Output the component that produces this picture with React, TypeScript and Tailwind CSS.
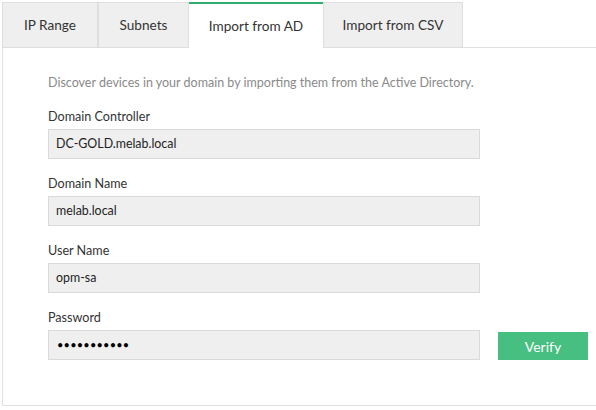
import React from 'react';

const tabs = [
  { label: 'IP Range', width: 'w-[96px]' },
  { label: 'Subnets', width: 'w-[91px]' },
  { label: 'Import from AD', width: 'w-[134px]', active: true },
  { label: 'Import from CSV', width: 'w-[140px]' },
];

const fields = [
  { label: 'Domain Controller', value: 'DC-GOLD.melab.local' },
  { label: 'Domain Name', value: 'melab.local' },
  { label: 'User Name', value: 'opm-sa' },
];

const Field = ({ label, value }: { label: string; value: string }) => (
  <div className="mt-4 flex flex-col">
    <p className="text-[12.6px] leading-[18px] text-[#333]">{label}</p>
    <div className="mt-[3px] flex h-[30px] w-[432px] items-center border border-[#dadada] bg-[#efefef] px-[7px] text-[12.4px] text-[#222]">
      {value}
    </div>
  </div>
);

const App = () => {
  return (
    <div
      className="h-[410px] w-[596px] overflow-hidden bg-white pl-[2px] pt-[2px]"
      style={{ fontFamily: 'Lato, "Open Sans", sans-serif' }}
    >
      <div className="flex h-[46px] w-[700px]">
        {tabs.map((tab) =>
          tab.active ? (
            <div
              key={tab.label}
              className={`${tab.width} flex items-center justify-center border-t-2 border-[#2fae6c] bg-white text-[13.6px] text-[#333]`}
            >
              {tab.label}
            </div>
          ) : (
            <div
              key={tab.label}
              className={`${tab.width} flex items-center justify-center border border-[#dedede] bg-[#efefef] text-[13.6px] text-[#333]`}
            >
              {tab.label}
            </div>
          )
        )}
        <div className="flex-1 border-b border-[#e0e0e0]" />
      </div>

      <div className="h-[358px] w-[620px] border-x border-b border-[#e0e0e0] pl-[45px] pt-[26px]">
        <p className="text-[12.5px] leading-[18px] text-[#8a8a8a]">
          Discover devices in your domain by importing them from the Active Directory.
        </p>

        {fields.map((f) => (
          <Field key={f.label} label={f.label} value={f.value} />
        ))}

        <div className="mt-4 flex flex-col">
          <p className="text-[12.6px] leading-[18px] text-[#333]">Password</p>
          <div className="mt-[3px] flex items-center">
            <div className="flex h-[30px] w-[432px] items-center border border-[#dadada] bg-[#efefef] px-[8px] text-[11px] tracking-[0.2px] text-black">
              •••••••••••
            </div>
            <button className="ml-[18px] mt-[2px] h-[28px] w-[90px] bg-[#46bf80] text-[14px] text-white">
              Verify
            </button>
          </div>
        </div>
      </div>
    </div>
  );
};

export default App;
